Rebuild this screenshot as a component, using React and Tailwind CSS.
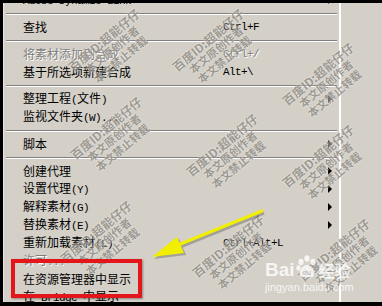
import React from 'react';

const items = [
    { t: 'Adobe Dynamic Link', arrow: true },
    { sep: true },
    { t: '查找', sc: 'Ctrl+F' },
    { sep: true },
    { t: '将素材添加到合成', sc: 'Ctrl+/', dis: true },
    { t: '基于所选项新建合成', sc: 'Alt+\\' },
    { sep: true },
    { t: '整理工程(文件)', arrow: true },
    { t: '监视文件夹(W)...' },
    { sep: true },
    { t: '脚本', arrow: true },
    { sep: true },
    { t: '创建代理', arrow: true },
    { t: '设置代理(Y)', arrow: true },
    { t: '解释素材(G)', arrow: true },
    { t: '替换素材(E)', arrow: true },
    { t: '重新加载素材(L)', sc: 'Ctrl+Alt+L' },
    { t: '许可...', dis: true },
    { t: '在资源管理器中显示' },
    { t: '在 Bridge 中显示' },
];

// latin runs in the menu font are half-width, so give them a mono face
const Txt = ({ s }) =>
    s.split(/([\x20-\x7e]+)/).map((p, i) =>
        /[\x20-\x7e]/.test(p) ? (
            <span key={i} className="font-['Liberation_Mono',monospace] text-[11px] tracking-[-0.6px]">{p}</span>
        ) : (
            p
        )
    );

const Arrow = () => (
    <svg width="5" height="8" viewBox="0 0 5 8" className="block">
        <path d="M0 0 L4 4 L0 8 Z" fill="#000" />
    </svg>
);

const Watermark = ({ x, y }) => (
    <div
        className="absolute flex flex-col items-center leading-[13px] text-[#8f8b83] opacity-80 font-['Noto_Sans_CJK_SC',sans-serif] font-bold [text-shadow:0_0_2px_#fff] -rotate-[40deg] whitespace-nowrap"
        style={{ left: x - 50, top: y - 22 }}
    >
        <span className="text-[12px] w-[100px] text-center">百度ID:超能仔仔</span>
        <span className="text-[11px] w-[100px] text-center">本文原创作者</span>
        <span className="text-[11px] w-[100px] text-center">本文禁止转载</span>
    </div>
);

const marks = [
    [112, 52], [216, 52], [326, 86],
    [114, 140], [230, 157], [326, 168],
    [104, 244], [236, 258], [342, 262],
];

export default function App() {
    return (
        <div className="w-[382px] h-[306px] relative overflow-hidden bg-black flex flex-col font-['Noto_Sans_CJK_SC',sans-serif] text-[12px] text-black">
            <div className="h-[3px] shrink-0 bg-black" />
            <div className="flex flex-1 min-h-0">
                <div className="w-[3px] bg-black" />
                <div className="w-[336px] bg-[#d4d0c8] border-l border-[#e8e6e2] overflow-hidden">
                    <div className="-mt-[12px]">
                        {items.map((it, i) =>
                            it.sep ? (
                                <div key={i} className="h-[9px] pt-[4px] mx-[2px]">
                                    <div className="h-px bg-[#808080]" />
                                    <div className="h-px bg-white" />
                                </div>
                            ) : (
                                <div
                                    key={i}
                                    className={`h-[18px] flex items-center pl-[19px] pr-[6px] ${it.dis ? 'text-[#808080] [text-shadow:1px_1px_0_#fff]' : ''}`}
                                >
                                    <span className="w-[200px] whitespace-nowrap">
                                        <Txt s={it.t} />
                                    </span>
                                    <span className="flex-1 font-['Liberation_Mono',monospace] text-[11px] tracking-[-0.6px]">{it.sc}</span>
                                    {it.arrow && <Arrow />}
                                </div>
                            )
                        )}
                    </div>
                </div>
                <div className="w-[2px] bg-white" />
                <div className="flex-1 bg-[#d4d0c8]" />
            </div>
            <div className="h-[4px] shrink-0 bg-black" />

            {marks.map(([x, y], i) => (
                <Watermark key={i} x={x} y={y} />
            ))}

            {/* red highlight box */}
            <div className="absolute left-[11px] top-[259px] w-[131px] h-[39px] border-[4px] border-[#e3161c] shadow-[1px_1px_2px_rgba(0,0,0,0.35)]" />

            {/* yellow pointer */}
            <svg className="absolute left-0 top-0" width="382" height="306">
                <g transform="translate(2,2)" opacity="0.3">
                    <line x1="262" y1="211" x2="178" y2="245" stroke="#333" strokeWidth="3" />
                    <path d="M152 257 L177 237 L184 253 Z" fill="#333" />
                </g>
                <line x1="262" y1="211" x2="178" y2="245" stroke="#f2ee00" strokeWidth="3" strokeLinecap="round" />
                <path d="M152 257 L177 237 L184 253 Z" fill="#f2ee00" />
            </svg>

            {/* baidu jingyan logo */}
            <div className="absolute left-[265px] top-[251px] flex flex-col text-white opacity-80">
                <div className="flex items-end h-[28px]">
                    <span className="font-['Liberation_Sans',sans-serif] font-bold text-[19px] leading-[19px]">Bai</span>
                    <svg width="22" height="24" viewBox="0 0 22 24" className="mx-[1px]">
                        <ellipse cx="5" cy="7" rx="2.6" ry="3.2" fill="#fff" />
                        <ellipse cx="11" cy="3.5" rx="2.6" ry="3.2" fill="#fff" />
                        <ellipse cx="17" cy="7" rx="2.6" ry="3.2" fill="#fff" />
                        <ellipse cx="2.5" cy="13" rx="2.2" ry="2.8" fill="#fff" />
                        <path d="M11 10 C6 10 3 17 4 20 C5 23 8 22 11 22 C14 22 17 23 18 20 C19 17 16 10 11 10 Z" fill="#fff" />
                        <text x="11" y="20" textAnchor="middle" fontSize="7" fontWeight="bold" fill="#c8c4bc" fontFamily="Liberation Sans, sans-serif">du</text>
                    </svg>
                    <span className="font-bold text-[16px] leading-[18px]">经验</span>
                </div>
                <span className="font-['Liberation_Sans',sans-serif] text-[11px] leading-[13px] mt-[2px]">jingyan.baidu.com</span>
            </div>
        </div>
    );
}
